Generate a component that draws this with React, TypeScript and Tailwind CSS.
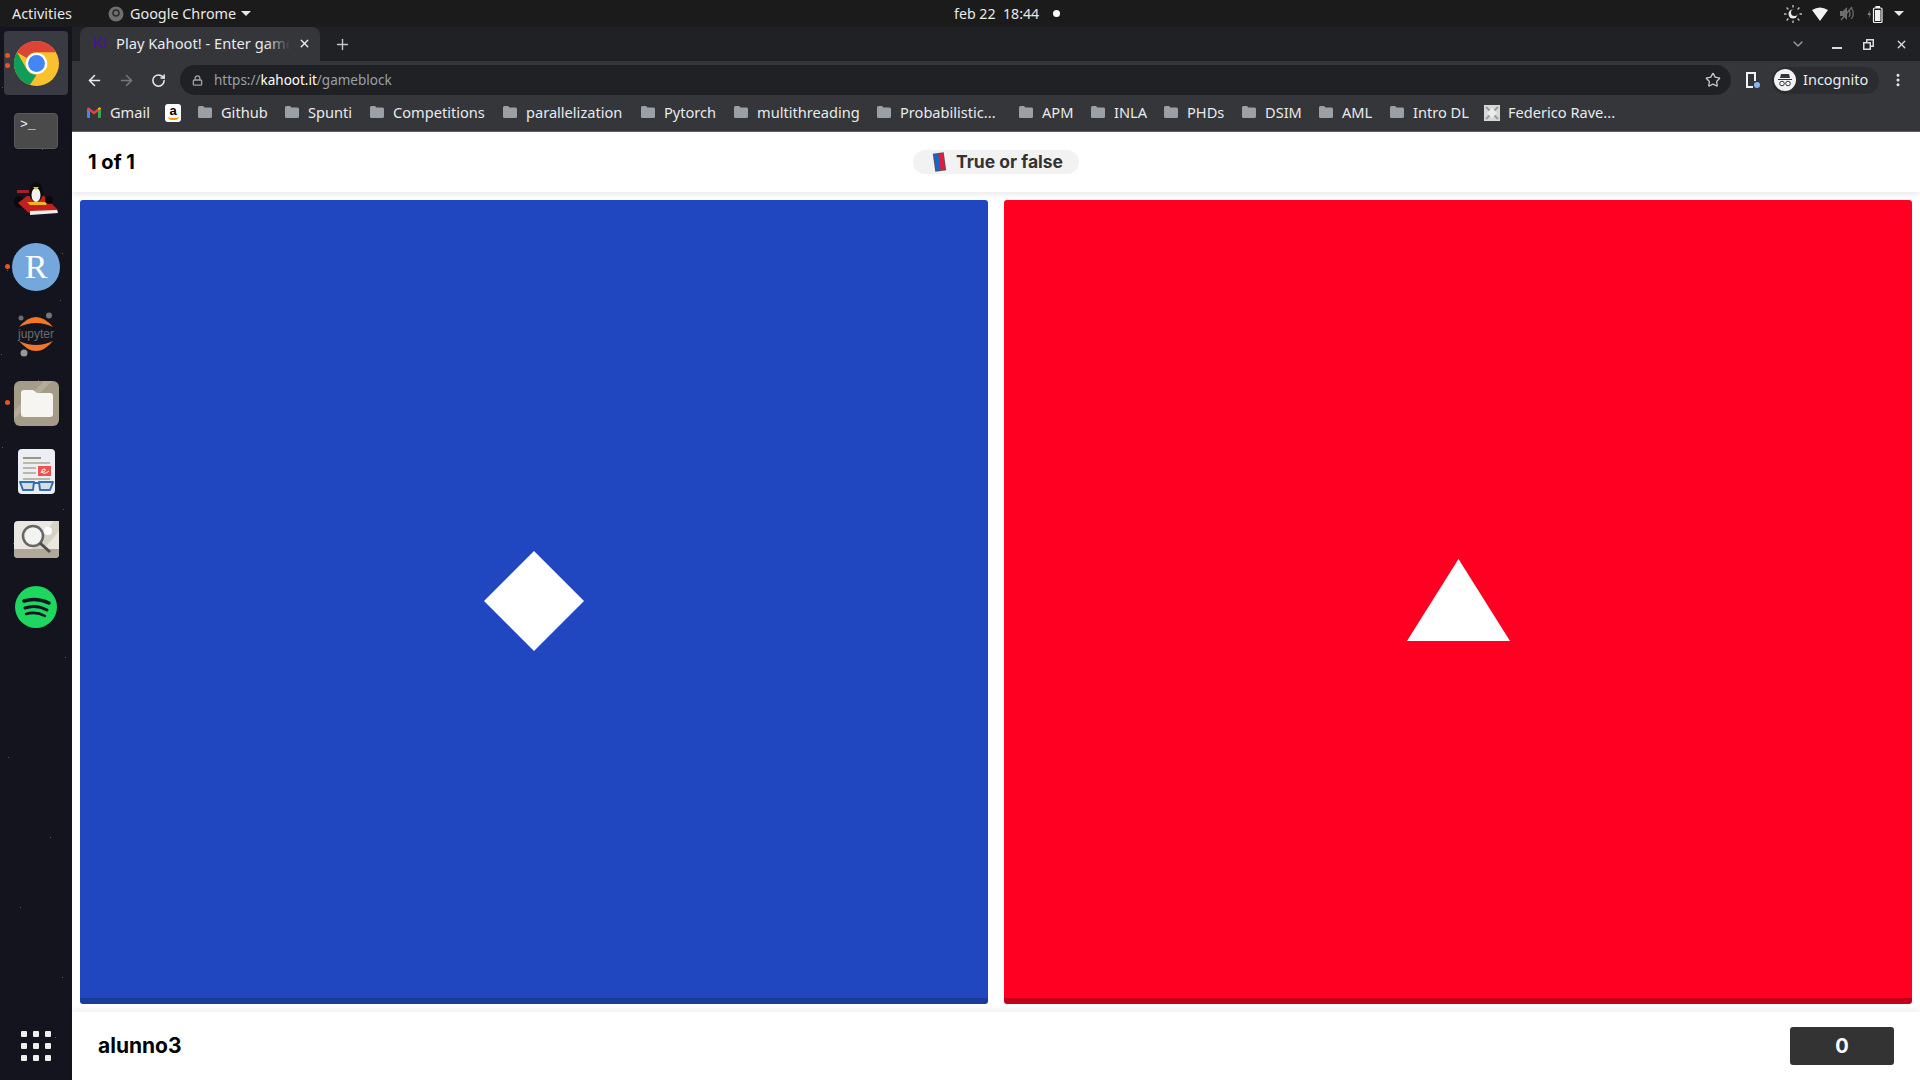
import React from "react";
import { ArrowLeft, ArrowRight, ChevronDown, Lock, MoreVertical, Plus, RotateCw, Star, X } from "lucide-react";

const bookmarks = [
  { label: "Github", width: "w-[47px]" },
  { label: "Spunti", width: "w-[45px]" },
  { label: "Competitions", width: "w-[93px]" },
  { label: "parallelization", width: "w-[98px]" },
  { label: "Pytorch", width: "w-[53px]" },
  { label: "multithreading", width: "w-[103px]" },
  { label: "Probabilistic...", width: "w-[102px]" },
  { label: "APM", width: "w-[32px]" },
  { label: "INLA", width: "w-[33px]" },
  { label: "PHDs", width: "w-[38px]" },
  { label: "DSIM", width: "w-[37px]" },
  { label: "AML", width: "w-[31px]" },
  { label: "Intro DL", width: "w-[55px]" },
];

function FolderIcon() {
  return (
    <svg width="14" height="14" viewBox="0 0 14 14" className="shrink-0">
      <path d="M0 2.5 Q0 1 1.5 1 H5 L6.5 2.5 H12.5 Q14 2.5 14 4 V11.5 Q14 13 12.5 13 H1.5 Q0 13 0 11.5 Z" fill="#9aa0a6" />
    </svg>
  );
}

function ChromeLogo() {
  return (
    <svg width="45" height="45" viewBox="0 0 48 48">
      <circle cx="24" cy="24" r="24" fill="#fbc02d" />
      <path d="M24 0 A24 24 0 0 1 44.8 12 H24 A12 12 0 0 0 13.6 18 L3.2 12 A24 24 0 0 1 24 0 Z" fill="#db4437" />
      <path d="M3.2 12 L13.6 30 A12 12 0 0 0 24 36 L17 47 A24 24 0 0 1 3.2 12 Z" fill="#0f9d58" />
      <circle cx="24" cy="24" r="11.5" fill="#fff" />
      <circle cx="24" cy="24" r="9" fill="#4285f4" />
    </svg>
  );
}

function KartIcon() {
  return (
    <svg width="46" height="34" viewBox="0 0 46 34">
      <ellipse cx="6" cy="20" rx="5" ry="6" fill="#0a0a0a" />
      <path d="M4 8 H24 V11 H4 Z" fill="#a3202a" />
      <path d="M5 21 L14 14 H31 L45 28 L43 31 L16 31 Z" fill="#c41f1f" />
      <path d="M17 29 L44 28 L45 31 L17 33 Z" fill="#eeeeee" />
      <ellipse cx="23" cy="10" rx="7" ry="10" fill="#0b0b0b" />
      <ellipse cx="23" cy="13" rx="4.5" ry="7" fill="#f2f2f2" />
      <path d="M20 5 H26 L23 8 Z" fill="#f4b321" />
      <path d="M14 20 H35 L33 23 H17 Z" fill="#f4b321" />
      <ellipse cx="36" cy="18" rx="4" ry="4" fill="#0a0a0a" />
    </svg>
  );
}

function JupyterIcon() {
  return (
    <svg width="44" height="46" viewBox="0 0 44 46">
      <circle cx="7" cy="6" r="2.5" fill="#6d6e71" />
      <circle cx="35" cy="3.5" r="3" fill="#767677" />
      <circle cx="10" cy="41" r="3.5" fill="#989798" />
      <path d="M5 15 Q22 -5 39 15 Q22 7 5 15 Z" fill="#f37726" />
      <path d="M5 29 Q22 49 39 29 Q22 37 5 29 Z" fill="#f37726" />
      <text x="22" y="26" textAnchor="middle" fontSize="12" fill="#6b6b70" fontFamily="Liberation Sans, sans-serif">jupyter</text>
    </svg>
  );
}

function FilesIcon() {
  return (
    <svg width="45" height="45" viewBox="0 0 45 45">
      <rect width="45" height="45" rx="6" fill="#a49c88" />
      <path d="M0 30 L30 0 H38 L0 38 Z" fill="#b3ac9a" />
      <path d="M7 12 Q7 9 10 9 H19 L23 12 H36 Q39 12 39 15 V33 Q39 36 36 36 H10 Q7 36 7 33 Z" fill="#f7f5f2" />
    </svg>
  );
}

function ReaderIcon() {
  return (
    <svg width="37" height="45" viewBox="0 0 37 45">
      <rect width="37" height="45" rx="4" fill="#eceff1" />
      <rect x="5" y="8" width="18" height="2" fill="#9c9484" />
      <rect x="5" y="13" width="27" height="2" fill="#bdb7a9" />
      <rect x="5" y="18" width="13" height="2" fill="#bdb7a9" />
      <rect x="5" y="23" width="13" height="2" fill="#bdb7a9" />
      <rect x="20" y="17" width="13" height="10" fill="#ef5350" />
      <path d="M23 24 Q24 19 27 20 Q28 23 24 23 Q26 26 31 22" stroke="#fff" strokeWidth="1" fill="none" />
      <rect x="5" y="29" width="27" height="2" fill="#bdb7a9" />
      <path d="M2 33 H16 L15 41 H5 Z M21 33 H35 L32 41 H22 Z" fill="#d5dee5" stroke="#2f6fb5" strokeWidth="2" strokeLinejoin="round" />
      <path d="M16 34 H21" stroke="#2f6fb5" strokeWidth="2" />
    </svg>
  );
}

function SearchAppIcon() {
  return (
    <svg width="45" height="37" viewBox="0 0 45 37">
      <rect width="45" height="37" rx="4" fill="#e9e7df" />
      <path d="M18 28 L40 0 H45 V10 L30 28 Z" fill="#d6d3c6" />
      <path d="M0 28 H45 V33 Q45 37 41 37 H4 Q0 37 0 33 Z" fill="#b1a998" />
      <circle cx="34" cy="10" r="4" fill="#fff" />
      <circle cx="19" cy="15" r="10" fill="#f3f3f0" stroke="#676767" strokeWidth="2.5" />
      <path d="M26 22 L36 31" stroke="#4d4d4d" strokeWidth="3" />
    </svg>
  );
}

function SpotifyIcon() {
  return (
    <svg width="42" height="42" viewBox="0 0 42 42">
      <circle cx="21" cy="21" r="21" fill="#1ed760" />
      <path d="M9 15 Q21 11 34 17" stroke="#14141f" strokeWidth="3.5" fill="none" strokeLinecap="round" />
      <path d="M10 22 Q21 18 32 24" stroke="#14141f" strokeWidth="3" fill="none" strokeLinecap="round" />
      <path d="M11 28 Q21 25 30 30" stroke="#14141f" strokeWidth="2.5" fill="none" strokeLinecap="round" />
    </svg>
  );
}

// faint specks of the wallpaper showing through the dock
function DockSpecks() {
  const specks = [[63, 22], [2, 60], [27, 95], [42, 122], [62, 226], [7, 243], [60, 273], [1, 327], [38, 353], [58, 377], [2, 420], [63, 482], [13, 516], [40, 578], [65, 630], [8, 730], [50, 810], [20, 880], [62, 950], [55, 1010]];
  return (
    <svg width="72" height="1053" className="absolute left-0 top-0 pointer-events-none">
      {specks.map(([x, y]) => (
        <rect key={`${x}-${y}`} x={x} y={y} width="1" height="1" fill="#565662" />
      ))}
    </svg>
  );
}

function Dock() {
  return (
    <div className="w-[72px] shrink-0 bg-[#14141f] flex flex-col items-center pt-[4px] relative">
      <DockSpecks />
      <div className="h-[64px] w-[64px] rounded-[4px] bg-[#3a3a42] flex items-center justify-center relative">
        <ChromeLogo />
      </div>
      <div className="absolute left-[5px] top-[26px] w-[5px] h-[5px] rounded-full bg-[#e95420]" />
      <div className="absolute left-[5px] top-[36px] w-[5px] h-[5px] rounded-full bg-[#e95420]" />
      <div className="h-[70px] w-full pt-[2px] flex items-center justify-center relative">
        <div className="w-[44px] h-[36px] rounded-[4px] bg-[#4a4a4a] border border-[#5a5a5a] text-[#f2f2f2] text-[13px] leading-none pl-[5px] pt-[4px] font-['Liberation_Mono',monospace]">
          &gt;_
        </div>
      </div>
      <div className="h-[68px] flex items-center justify-center relative">
        <KartIcon />
      </div>
      <div className="h-[68px] flex items-center justify-center relative">
        <div className="w-[48px] h-[48px] rounded-full bg-[#74a8dc] text-white flex items-center justify-center text-[34px] leading-none font-['Liberation_Serif',serif]">
          R
        </div>
      </div>
      <div className="absolute left-[5px] top-[237px] w-[5px] h-[5px] rounded-full bg-[#e95420]" />
      <div className="h-[68px] flex items-center justify-center relative">
        <JupyterIcon />
      </div>
      <div className="h-[68px] flex items-center justify-center relative">
        <FilesIcon />
      </div>
      <div className="absolute left-[5px] top-[373px] w-[5px] h-[5px] rounded-full bg-[#e95420]" />
      <div className="h-[68px] flex items-center justify-center relative">
        <ReaderIcon />
      </div>
      <div className="h-[68px] flex items-center justify-center relative">
        <SearchAppIcon />
      </div>
      <div className="h-[68px] flex items-center justify-center relative">
        <SpotifyIcon />
      </div>
      <div className="mt-auto mb-[19px] grid grid-cols-3 gap-[6px] relative">
        {Array.from({ length: 9 }).map((_, i) => (
          <div key={i} className="w-[6px] h-[6px] rounded-[1px] bg-[#eeeeec]" />
        ))}
      </div>
    </div>
  );
}

function TopBar() {
  return (
    <div className="h-[27px] shrink-0 bg-[#1b1b1b] text-[#e8e8e8] text-[14.4px] flex items-center relative font-['Noto_Sans',sans-serif]">
      <span className="ml-[12px]">Activities</span>
      <svg width="16" height="16" viewBox="0 0 16 16" className="ml-[36px]">
        <circle cx="8" cy="8" r="7.5" fill="#6f6f6f" />
        <circle cx="8" cy="7" r="3" fill="none" stroke="#2b2b2b" strokeWidth="1.5" />
      </svg>
      <span className="ml-[6px]">Google Chrome</span>
      <div className="ml-[5px] w-0 h-0 border-x-[5px] border-x-transparent border-t-[5px] border-t-[#e8e8e8]" />
      <span className="absolute left-[954px] text-[14.2px]">feb 22&nbsp;&nbsp;18:44</span>
      <div className="absolute left-[1053px] w-[7px] h-[7px] rounded-full bg-white" />
      <div className="ml-auto mr-[16px] flex items-center">
        <svg width="18" height="18" viewBox="0 0 18 18" className="mr-[10px]">
          <circle cx="9" cy="9" r="4.5" fill="#e8e8e8" />
          <circle cx="10.5" cy="7.5" r="3.5" fill="#1b1b1b" />
          <path d="M9 0 V2.5 M9 15.5 V18 M0 9 H2.5 M15.5 9 H18 M2.6 2.6 L4.4 4.4 M13.6 13.6 L15.4 15.4 M2.6 15.4 L4.4 13.6 M13.6 4.4 L15.4 2.6" stroke="#bdbdbd" strokeWidth="1.4" />
        </svg>
        <svg width="16" height="14" viewBox="0 0 16 14" className="mr-[12px]">
          <path d="M0 3 Q8 -2 16 3 L8 14 Z" fill="#f2f2f2" />
        </svg>
        <svg width="15" height="15" viewBox="0 0 15 15" className="mr-[12px]">
          <path d="M0 5 H3 L7 1 V14 L3 10 H0 Z" fill="#6d6d6d" />
          <path d="M9 4 Q11 7.5 9 11 M11.5 2 Q15 7.5 11.5 13" stroke="#6d6d6d" strokeWidth="1.3" fill="none" />
          <path d="M1 14 L12 1" stroke="#6d6d6d" strokeWidth="1.3" />
        </svg>
        <svg width="16" height="18" viewBox="0 0 16 18" className="mr-[11px]">
          <path d="M3 5 L0.5 10 H2.5 L1.5 14 L4 8.5 H2.5 Z" fill="#8a8a8a" />
          <rect x="6.5" y="3" width="8.5" height="14.5" rx="1" fill="none" stroke="#f2f2f2" strokeWidth="1.2" />
          <rect x="8.5" y="1" width="4.5" height="2" fill="#f2f2f2" />
          <rect x="8" y="5" width="5.5" height="11" fill="#f2f2f2" />
        </svg>
        <div className="w-0 h-0 border-x-[5px] border-x-transparent border-t-[5px] border-t-[#e8e8e8]" />
      </div>
    </div>
  );
}

function TabStrip() {
  return (
    <div className="h-[34px] shrink-0 bg-[#202124] flex items-end pl-[8px] text-[#e8eaed] text-[14.7px] font-['Noto_Sans',sans-serif]">
      <div className="w-[240px] h-[34px] bg-[#35363a] rounded-t-[8px] flex items-center pl-[13px] pr-[10px] pb-[2px] relative">
        <span className="w-[13px] text-[#46178f] text-[14px] font-bold leading-none shrink-0 font-['Liberation_Sans',sans-serif]">K!</span>
        <span className="ml-[10px] w-[174px] overflow-hidden whitespace-nowrap relative">
          Play Kahoot! - Enter game
          <span className="absolute right-0 top-0 bottom-0 w-[24px] bg-gradient-to-r from-transparent to-[#35363a]" />
        </span>
        <X size={13} strokeWidth={2.5} className="ml-auto shrink-0 -mr-[1px]" />
      </div>
      <div className="h-[34px] flex items-center ml-[14px]">
        <Plus size={17} strokeWidth={2} className="text-[#c4c7c5]" />
      </div>
      <div className="ml-auto h-[34px] flex items-center pr-[12px] text-[#dadce0]">
        <ChevronDown size={16} strokeWidth={2} className="text-[#9aa0a6] mr-[26px]" />
        <div className="w-[10px] h-[2px] bg-[#dadce0] mt-[8px] mr-[21px]" />
        <svg width="11" height="11" viewBox="0 0 11 11" className="mr-[21px]">
          <path d="M3 0 H11 V8 H8 V11 H0 V3 H3 Z M4.5 1.5 V3 H8 V6.5 H9.5 V1.5 Z M1.5 4.5 V9.5 H6.5 V4.5 Z" fill="#dadce0" fillRule="evenodd" />
        </svg>
        <X size={13} strokeWidth={2.5} />
      </div>
    </div>
  );
}

function Toolbar() {
  return (
    <div className="h-[34px] shrink-0 bg-[#35363a] flex items-end text-[#e8eaed]">
      <div className="flex items-center h-[30px] w-[108px] pl-[14px] shrink-0 self-end">
        <ArrowLeft size={17} strokeWidth={2.2} />
        <ArrowRight size={17} strokeWidth={2.2} className="ml-[15px] text-[#75777b]" />
        <RotateCw size={15} strokeWidth={2.4} className="ml-[16px]" />
      </div>
      <div className="h-[30px] w-[1551px] shrink-0 bg-[#202124] rounded-full flex items-center pl-[12px] pr-[10px] text-[13.5px] font-['Noto_Sans',sans-serif]">
        <Lock size={11} strokeWidth={3} className="text-[#9aa0a6] shrink-0" />
        <span className="ml-[11px] text-[#9aa0a6]">https://</span>
        <span className="text-white">kahoot.it</span>
        <span className="text-[#9aa0a6]">/gameblock</span>
        <Star size={16} strokeWidth={2} className="ml-auto text-[#c4c7c5]" />
      </div>
      <div className="flex items-center h-[30px] ml-[15px]">
        <svg width="14" height="16" viewBox="0 0 14 16">
          <path d="M0 0 H10 V9 H8 V2 H2 V14 H7 V16 H0 Z" fill="#f1f3f4" />
          <circle cx="11" cy="13" r="3" fill="#8ab4f8" />
        </svg>
        <div className="ml-[12px] w-[107px] h-[27px] rounded-full bg-[#2b2c2f] flex items-center pl-[2px]">
          <div className="w-[22px] h-[22px] rounded-full bg-[#f1f3f4] flex items-center justify-center">
            <svg width="16" height="14" viewBox="0 0 16 14">
              <path d="M4 1 H12 L13 5 H3 Z M1 6 H15 V7 H1 Z" fill="#35363a" />
              <circle cx="5" cy="10.5" r="2.3" fill="none" stroke="#35363a" strokeWidth="1" />
              <circle cx="11" cy="10.5" r="2.3" fill="none" stroke="#35363a" strokeWidth="1" />
            </svg>
          </div>
          <span className="ml-[7px] text-[14.5px] font-['Noto_Sans',sans-serif]">Incognito</span>
        </div>
        <MoreVertical size={16} strokeWidth={2.5} className="ml-[11px]" />
      </div>
    </div>
  );
}

function BookmarksBar() {
  return (
    <div className="h-[37px] shrink-0 bg-[#35363a] border-b border-[#5f6064] flex items-center pl-[15px] pb-[1px] text-[#e8eaed] text-[14.6px] whitespace-nowrap font-['Noto_Sans',sans-serif]">
      <svg width="14" height="11" viewBox="0 0 14 11" className="shrink-0">
        <path d="M0 2 L3 3 V11 H1 Q0 11 0 10 Z" fill="#4285f4" />
        <path d="M11 3 L14 2 V10 Q14 11 13 11 H11 Z" fill="#34a853" />
        <path d="M0 2 Q0 0 2 0.5 L7 4.5 L12 0.5 Q14 0 14 2 L7 7.5 Z" fill="#ea4335" />
        <path d="M11 3 L14 2 Q14 0 12 0.5 L11 1.3 Z" fill="#fbbc04" />
      </svg>
      <span className="ml-[9px] w-[39px]">Gmail</span>
      <div className="ml-[16px] w-[16px] h-[18px] rounded-[3px] bg-white flex flex-col items-center justify-center shrink-0">
        <span className="text-black text-[13px] leading-[10px] font-bold font-['Liberation_Sans',sans-serif]">a</span>
        <div className="w-[11px] h-[4px] border-b-2 border-[#f90] rounded-b-full" />
      </div>
      <div className="ml-[17px] flex items-center gap-[17px]">
        {bookmarks.map((b) => (
          <div key={b.label} className="flex items-center gap-[9px]">
            <FolderIcon />
            <span className={b.width}>{b.label}</span>
          </div>
        ))}
      </div>
      <svg width="16" height="16" viewBox="0 0 16 16" className="ml-[16px] shrink-0">
        <rect width="16" height="16" fill="#d8d8d8" />
        <path d="M2 2 L14 14 M14 2 L2 14" stroke="#9a9a9a" strokeWidth="2" />
        <path d="M8 3 L13 8 L8 13 L3 8 Z" fill="#ececec" />
      </svg>
      <span className="ml-[8px]">Federico Rave...</span>
    </div>
  );
}

function Page() {
  return (
    <div className="flex-1 min-h-0 bg-white flex flex-col font-['Inter',sans-serif]">
      <div className="h-[60px] shrink-0 flex items-center relative shadow-[0_2px_6px_rgba(0,0,0,0.1)] z-10 bg-white">
        <span className="ml-[16px] text-[20px] font-bold text-black">1 of 1</span>
        <div className="absolute left-[841px] top-[18px] h-[24px] w-[166px] rounded-full bg-[#f2f2f2] flex items-center pl-[19px]">
          <svg width="15" height="20" viewBox="0 0 15 20" className="shrink-0">
            <g transform="rotate(-8 7.5 10)">
              <rect x="2" y="1" width="11" height="18" fill="#555" />
              <rect x="3" y="2" width="4.5" height="16" fill="#1368ce" />
              <rect x="7.5" y="2" width="4.5" height="16" fill="#e21b3c" />
            </g>
          </svg>
          <span className="ml-[9px] text-[17.5px] font-bold text-[#333] whitespace-nowrap">True or false</span>
        </div>
      </div>
      <div className="flex-1 min-h-0 flex gap-[16px] px-[8px] pt-[8px] pb-[8px] bg-white">
        <div className="flex-1 rounded-[3px] bg-[#2047c0] border-b-[6px] border-[#1a3a9c] flex items-center justify-center">
          <svg width="100" height="100" viewBox="0 0 100 100" className="mt-[3px]">
            <path d="M50 0 L100 50 L50 100 L0 50 Z" fill="#fff" />
          </svg>
        </div>
        <div className="flex-1 rounded-[3px] bg-[#ff0023] border-b-[6px] border-[#c4001c] flex items-center justify-center">
          <svg width="103" height="82" viewBox="0 0 103 82" className="mt-[1px]">
            <path d="M51.5 0 L103 82 H0 Z" fill="#fff" />
          </svg>
        </div>
      </div>
      <div className="h-[68px] shrink-0 flex items-center relative bg-white shadow-[0_-3px_5px_rgba(0,0,0,0.06)]">
        <span className="ml-[26px] mb-[1px] text-[21px] font-bold text-black">alunno3</span>
        <div className="ml-auto mr-[26px] w-[104px] h-[38px] rounded-[3px] bg-[#333] text-white text-[20px] font-bold flex items-center justify-center">
          0
        </div>
      </div>
    </div>
  );
}

export default function App() {
  return (
    <div className="w-[1920px] h-[1080px] overflow-hidden flex flex-col">
      <TopBar />
      <div className="flex-1 min-h-0 flex">
        <Dock />
        <div className="flex-1 min-w-0 flex flex-col">
          <TabStrip />
          <Toolbar />
          <BookmarksBar />
          <Page />
        </div>
      </div>
    </div>
  );
}
